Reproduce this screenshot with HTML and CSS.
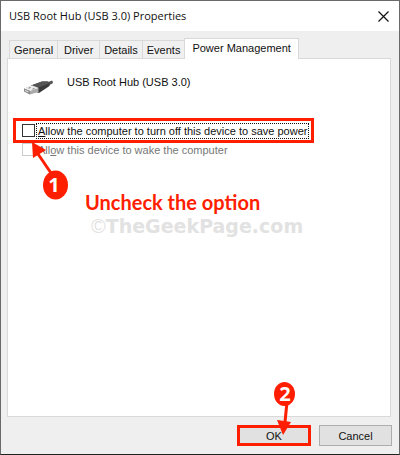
FILE: index.html
```html
<!DOCTYPE html>
<html lang="en">
<head>
    <meta charset="UTF-8">
    <meta name="viewport" content="width=device-width, initial-scale=1.0">
    <title>USB Root Hub (USB 3.0) Properties</title>
    <link rel="stylesheet" href="styles.css">
</head>
<body>

    <main class="dialog">
        <!-- Title bar -->
        <header class="titlebar">
            <h1>USB Root Hub (USB 3.0) Properties</h1>
            <button type="button" class="close" aria-label="Close">
                <svg width="11" height="11" viewBox="0 0 11 11"><path d="M.5 .5l10 10M10.5 .5l-10 10" stroke="#111" stroke-width="1.2"/></svg>
            </button>
        </header>

        <!-- Tabs -->
        <nav class="tabs" role="tablist">
            <button type="button" role="tab" class="tab">General</button>
            <button type="button" role="tab" class="tab">Driver</button>
            <button type="button" role="tab" class="tab">Details</button>
            <button type="button" role="tab" class="tab">Events</button>
            <button type="button" role="tab" class="tab active" aria-selected="true">Power Management</button>
        </nav>

        <!-- Power Management -->
        <section class="panel">
            <div class="device">
                <svg class="device-icon" width="32" height="18" viewBox="0 0 32 18">
                    <path d="M24 4L30 1.500L31 3L30.500 4.500L25 7z" fill="#555"/>
                    <path d="M9 6.500L20 2.500L26 2.500L28 4L27.500 7L17 14L13 12.500z" fill="#3b3b3b"/>
                    <path d="M9 6.500L20 2.500L26 2.500L28 4L15.500 9z" fill="#555"/>
                    <path d="M2 9.500L10 6.500L16.500 9L16.500 13L8 15.500L2 12z" fill="#aaa"/>
                    <path d="M2 9.500L10 6.500L16.500 9L8 12z" fill="#ededed"/>
                    <path d="M2 9.500L8 12L8 15.500L2 12.500z" fill="#888"/>
                    <path d="M3 11l3.500 1.500v1L3 12z" fill="#eee"/>
                    <path d="M6 9l2-.7 1 .5-2 .7zM10 10l2-.7 1 .5-2 .7z" fill="#666"/>
                </svg>
                <span>USB Root Hub (USB 3.0)</span>
            </div>
            <label class="option marked">
                <input type="checkbox">
                <span class="focus"><u>A</u>llow the computer to turn off this device to save power</span>
            </label>
            <label class="option disabled">
                <input type="checkbox" disabled>
                <span>All<u>o</u>w this device to wake the computer</span>
            </label>

            <!-- Notes over the panel -->
            <svg class="arrow arrow-one" width="46" height="62" viewBox="0 0 46 62">
                <path d="M28 31L15 12" stroke="#ff1e00" stroke-width="3"/>
                <path d="M9 0L23 8L10 16z" fill="#ff1e00"/>
                <ellipse cx="32.500" cy="43" rx="12.500" ry="14.500" fill="#ff1e00"/>
                <text x="31" y="50" text-anchor="middle">1</text>
            </svg>
            <p class="note">Uncheck the option</p>
            <p class="watermark"><span>©</span>TheGeekPage.com</p>
        </section>

        <!-- Buttons -->
        <footer class="actions">
            <button type="button" class="btn btn-ok">OK</button>
            <button type="button" class="btn">Cancel</button>
            <svg class="arrow arrow-two" width="24" height="64" viewBox="0 -10 24 64">
                <path d="M14 20L12 40" stroke="#ff1e00" stroke-width="3"/>
                <path d="M4 38L18 40L10 53z" fill="#ff1e00"/>
                <ellipse cx="11.500" cy="12" rx="10.500" ry="12" fill="#ff1e00"/>
                <text x="12" y="19" text-anchor="middle">2</text>
            </svg>
        </footer>
    </main>

</body>
</html>
```
FILE: styles.css
```css
* {
    margin: 0;
    padding: 0;
    box-sizing: border-box;
}

body {
    font-family: "Liberation Sans", Arial, sans-serif;
    font-size: 11px;
    line-height: 14px;
    color: #111;
    background-color: #efefef;
}

button {
    font: inherit;
    color: inherit;
}

.dialog {
    display: flex;
    flex-direction: column;
    min-height: 100vh;
    border: 1px solid #6b696b;
    border-bottom-color: #222;
    background-color: #efefef;
}

/* Title bar */
.titlebar {
    display: flex;
    justify-content: space-between;
    align-items: center;
    height: 30px;
    padding: 0 10px 0 8px;
    background-color: #fff;
}

.titlebar h1 {
    font-family: "Open Sans", sans-serif;
    font-size: 11px;
    font-weight: normal;
}

.close {
    display: flex;
    border: none;
    background: none;
}

/* Tabs */
.tabs {
    display: flex;
    align-items: flex-end;
    padding: 7px 8px 0;
}

.tab {
    height: 18px;
    padding: 0 4px;
    border: 1px solid #d9d9d9;
    border-right: none;
    border-bottom: none;
    background-color: #f0f0f0;
    min-width: 42px;
}

.tab.active {
    position: relative;
    height: 21px;
    margin-bottom: -1px;
    padding: 0 7px 2px 7px;
    border-right: 1px solid #d9d9d9;
    background-color: #fff;
    z-index: 1;
}

/* Panel */
.panel {
    position: relative;
    flex: 1;
    margin: 0 8px 0 6px;
    border: 1px solid #d9d9d9;
    background-color: #fff;
}

.device {
    display: flex;
    gap: 13px;
    align-items: flex-start;
    padding: 16px 14px 0;
    height: 59px;
}

.device-icon {
    margin-top: 4px;
}

.option {
    display: flex;
    align-items: center;
    gap: 2px;
    width: fit-content;
    height: 25px;
    margin-left: 5px;
    border: 3px solid transparent;
    padding: 0 6px;
    white-space: nowrap;
}

.option.marked {
    border-color: #ff1e00;
    padding-right: 3px;
}

.option input {
    appearance: none;
    width: 13px;
    height: 13px;
    border: 1px solid #333;
    background-color: #fff;
}

.option.disabled {
    height: 19px;
    margin-top: -3px;
    color: #777;
}

.option.disabled input {
    border-color: #ccc;
}

.option span {
    padding: 0 1px;
}

.option .focus {
    outline: 1px dotted #111;
}

/* Notes */
.arrow {
    position: absolute;
}

.arrow text {
    font: bold 20px "Open Sans", sans-serif;
    fill: #fff;
}

.arrow-one {
    left: 15px;
    top: 83px;
}

.arrow-two {
    right: 102px;
    bottom: 18px;
}

.note {
    position: absolute;
    left: 77px;
    top: 131px;
    font: bold 20px/24px Lato, sans-serif;
    color: #ff1e00;
}

.watermark {
    position: absolute;
    left: 83px;
    top: 155px;
    font: bold 19px/24px "DejaVu Sans", sans-serif;
    color: #e2e2e2;
}

.watermark span {
    font: 20px "Liberation Sans", Arial, sans-serif;
}

/* Buttons */
.actions {
    position: relative;
    display: flex;
    justify-content: flex-end;
    align-items: center;
    gap: 8px;
    padding: 8px 7px;
}

.btn {
    width: 73px;
    height: 21px;
    border: 1px solid #adadad;
    background-color: #e1e1e1;
}

.btn-ok {
    width: 74px;
    border: 3px solid #ff1e00;
}
```
